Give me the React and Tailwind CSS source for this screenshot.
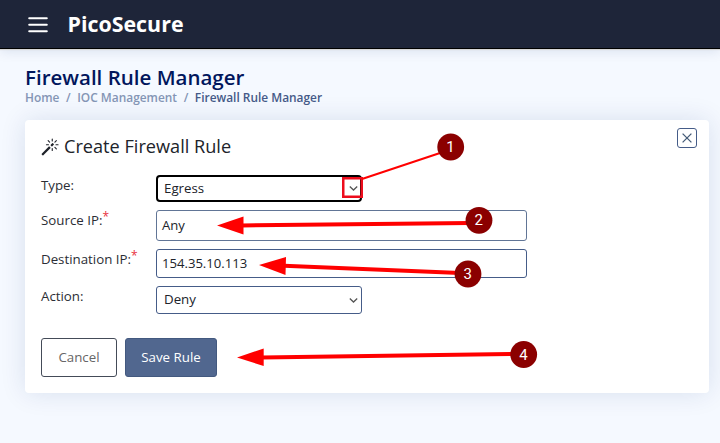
import { BsMagic } from "react-icons/bs";

function Chevron() {
  return (
    <svg className="h-[5px] w-[9px]" viewBox="0 0 9 5" fill="none">
      <path d="M0.8 0.6 4.5 4 8.2 0.6" stroke="#555" strokeWidth="1.3" />
    </svg>
  );
}

function SelectBox({ value, focused }) {
  return (
    <div
      className={
        focused
          ? "flex h-[27px] w-[206px] items-center justify-between rounded-[4px] border-2 border-black pr-[2px] pl-[6px]"
          : "flex h-[28px] w-[206px] items-center justify-between rounded-[3px] border border-[#455c88] pr-[3px] pl-[7px]"
      }
    >
      <span className="text-[13.3px] leading-none">{value}</span>
      <Chevron />
    </div>
  );
}

function Label({ children, required }) {
  return (
    <div className="flex w-[115px] items-start pt-px text-[13.3px] leading-[18px] text-[#2b2e35]">
      {children}
      {required && <span className="-mt-[3px] text-[12px] text-[#e83040]">*</span>}
    </div>
  );
}

function Arrow({ points, tail, width }) {
  return (
    <>
      <line x1={tail[0]} y1={tail[1]} x2={tail[2]} y2={tail[3]} stroke="#f00" strokeWidth={width} />
      {points && <polygon points={points} fill="#f00" />}
    </>
  );
}

function Marker({ x, y, n }) {
  return (
    <>
      <circle cx={x} cy={y} r="13.4" fill="#8b0000" />
      <text x={x - 0.3} y={y + 5} textAnchor="middle" fill="#fff" fontSize="15" fontFamily="Roboto, sans-serif">
        {n}
      </text>
    </>
  );
}

export default function App() {
  return (
    <div className="relative h-[443px] w-[720px] overflow-hidden bg-[#f5f9ff] font-['Open_Sans',sans-serif] text-[#20232a]">
      <header className="relative flex h-[49px] items-center border-b border-black bg-[#1e2539] pl-[28px] shadow-[0_1px_1px_#d8d8d8,0_2px_12px_rgba(1,41,112,0.12)]">
        <svg className="h-[17px] w-[20px]" viewBox="0 0 20 17" fill="none">
          <path d="M1.2 2.3H18.8M1.2 8.7H18.8M1.2 15.2H18.8" stroke="#fff" strokeWidth="2" strokeLinecap="round" />
        </svg>
        <span className="ml-[19.5px] text-[21.4px] leading-[28px] font-bold text-white">PicoSecure</span>
      </header>

      <main className="px-[25px] pt-[15px]">
        <h1 className="h-[26px] text-[20.5px] leading-[26px] font-semibold whitespace-nowrap text-[#01165c]">Firewall Rule Manager</h1>
        <nav className="flex h-[14px] items-center text-[11.9px] leading-[14px] font-semibold whitespace-nowrap text-[#8495b5]">
          <span>Home</span>
          <span className="mx-[6.6px]">/</span>
          <span>IOC Management</span>
          <span className="mx-[6.6px]">/</span>
          <span className="text-[#455a88]">Firewall Rule Manager</span>
        </nav>

        <section className="mt-[16px] flex h-[273px] w-[684px] flex-col rounded-[4px] bg-white px-[16px] shadow-[0_0_26px_rgba(1,41,112,0.12)]">
          <div className="flex h-[55px] justify-between">
            <h2 className="flex items-center pb-px text-[18.15px]">
              <BsMagic className="mr-[5px] h-[18px] w-[18px]" />
              Create Firewall Rule
            </h2>
            <button className="mt-[8px] mr-[-4px] flex h-[20px] w-[20px] items-center justify-center rounded-[3px] border border-[#455c88]">
              <svg className="h-[10px] w-[10px]" viewBox="0 0 10 10">
                <path d="M0.6 0.6 9.4 9.4M9.4 0.6 0.6 9.4" stroke="#455c78" strokeWidth="1.3" />
              </svg>
            </button>
          </div>

          <div className="flex h-[35px]">
            <Label>Type:</Label>
            <SelectBox value="Egress" focused />
          </div>
          <div className="flex h-[39px]">
            <Label required>Source IP:</Label>
            <div className="flex h-[31px] w-[371px] items-center rounded-[3px] border border-[#617596] pl-[5px] text-[13.1px]">Any</div>
          </div>
          <div className="flex h-[37px]">
            <Label required>Destination IP:</Label>
            <div className="flex h-[29px] w-[371px] items-center rounded-[3px] border border-[#455c88] pl-[5px] text-[13.1px]">154.35.10.113</div>
          </div>
          <div className="flex h-[52px]">
            <Label>Action:</Label>
            <SelectBox value="Deny" />
          </div>
          <div className="flex gap-[8px]">
            <button className="h-[39px] w-[76px] rounded-[3px] border border-[#444b58] text-[13.3px] text-[#666]">Cancel</button>
            <button className="h-[39px] w-[92px] rounded-[3px] border border-[#43597f] bg-[#51678f] text-[13.3px] text-white">Save Rule</button>
          </div>
        </section>
      </main>

      <svg className="absolute inset-0 h-[443px] w-[720px]" viewBox="0 0 720 443">
        <rect x="343.25" y="178.25" width="18.5" height="18.5" fill="none" stroke="#ed0c1c" strokeWidth="2.5" />
        <Arrow tail={[362, 179, 440, 153]} width="2" />
        <Arrow tail={[242, 225.5, 470, 223]} points="217,225.5 243.5,216.5 243.5,234.5" width="4" />
        <Arrow tail={[284, 265.8, 460, 273]} points="259,265 286,257 285.5,275" width="4" />
        <Arrow tail={[262, 357.4, 512, 354]} points="237,357.5 263.7,348.5 263.7,366" width="4" />
        <Marker x={450.7} y={147} n="1" />
        <Marker x={479} y={220.3} n="2" />
        <Marker x={468} y={274} n="3" />
        <Marker x={523.7} y={354.5} n="4" />
      </svg>
    </div>
  );
}
